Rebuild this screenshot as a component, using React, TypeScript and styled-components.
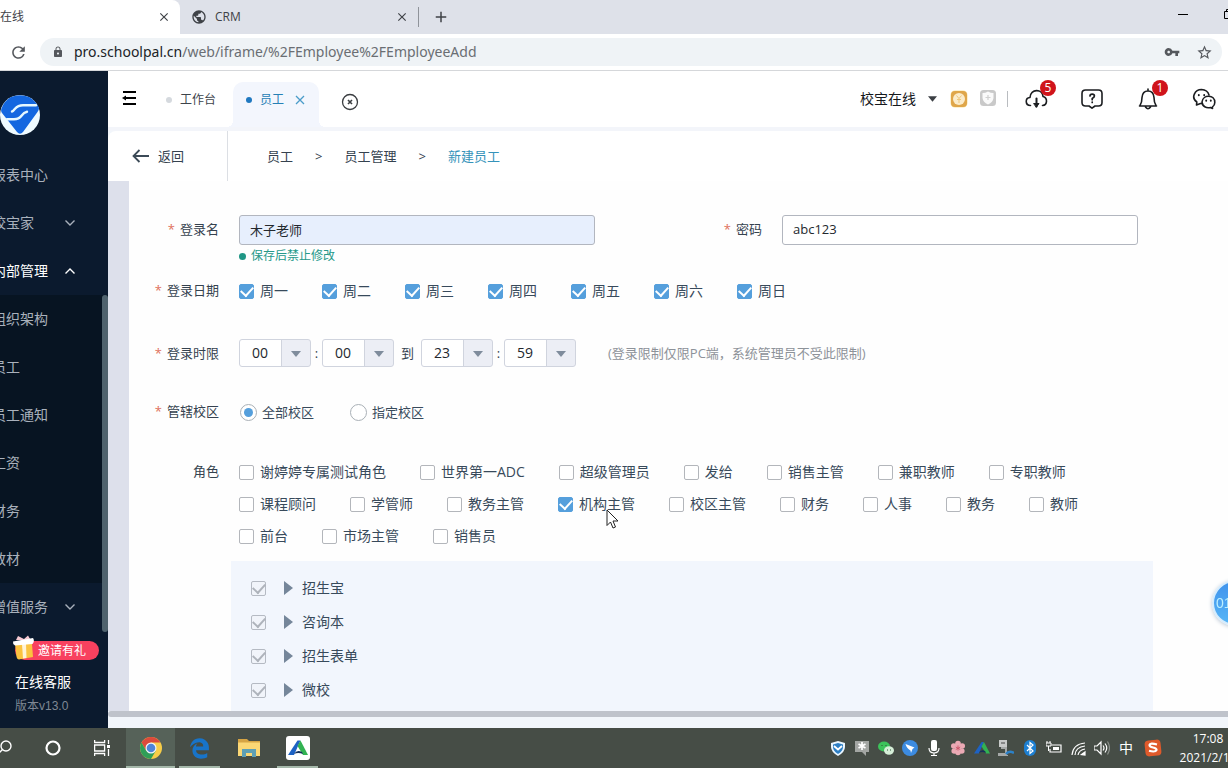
import React from "react";
import styled, { createGlobalStyle, css } from "styled-components";
import { MdRefresh, MdLock, MdVpnKey, MdStarBorder, MdPublic, MdClose, MdAdd } from "react-icons/md";
import { FaEdgeLegacy } from "react-icons/fa6";

const GlobalStyle = createGlobalStyle`
  * { box-sizing: border-box; }
  body {
    margin: 0;
    font-family: "Open Sans", "Noto Sans CJK SC", sans-serif;
    font-size: 14px;
    line-height: 20px;
    color: #35424f;
    background: #fff;
  }
  button, input, select { font: inherit; color: inherit; margin: 0; }
  button { border: 0; padding: 0; background: none; }
  a { color: inherit; text-decoration: none; }
  svg { display: block; flex: none; }
`;

const Desktop = styled.div`
  display: flex;
  flex-direction: column;
  height: 100vh;
  overflow: hidden;
`;

/* ---------- browser frame ---------- */

const TabStrip = styled.div`
  display: flex;
  align-items: center;
  flex: none;
  height: 34px;
  background: #dee1e9;
  color: #3f4247;
`;

const BrowserTab = styled.div<{ $active?: boolean }>`
  display: flex;
  align-items: center;
  gap: 8px;
  height: 34px;
  width: ${(p) => (p.$active ? 180 : 238)}px;
  padding: 0 9px 0 ${(p) => (p.$active ? 0 : 11)}px;
  background: ${(p) => (p.$active ? "#fff" : "transparent")};
  border-top-right-radius: 8px;
  font-size: 12px;
`;

const TabTitle = styled.span<{ $clipped?: boolean }>`
  flex: 1;
  white-space: nowrap;
  margin-left: ${(p) => (p.$clipped ? -24 : 0)}px;
`;

const StripDivider = styled.span`
  width: 1px;
  height: 20px;
  margin-right: 13px;
  background: #8f939a;
`;

const WindowButtons = styled.div`
  display: flex;
  gap: 36px;
  margin-left: auto;
  margin-right: -6px;
  padding-bottom: 6px;
`;

const AddressRow = styled.div`
  display: flex;
  align-items: center;
  flex: none;
  gap: 12px;
  height: 37px;
  padding: 0 6px 0 9px;
  border-bottom: 1px solid #d5d7da;
  color: #55585d;
`;

const Omnibox = styled.div`
  display: flex;
  align-items: center;
  flex: 1;
  height: 28px;
  padding: 0 9px 0 12px;
  border-radius: 14px;
  background: #eff3f6;
`;

const Url = styled.a`
  flex: 1;
  margin-left: 10px;
  font-family: "Noto Sans", sans-serif;
  font-size: 14px;
  color: #6a6e73;
  b { font-weight: 400; color: #202327; }
`;

const KeySlot = styled.span`
  margin-right: 16px;
`;

/* ---------- sidebar ---------- */

const AppShell = styled.div`
  display: flex;
  flex: 1;
  min-height: 0;
`;

const Sidebar = styled.aside`
  position: relative;
  display: flex;
  flex-direction: column;
  flex: none;
  width: 108px;
  overflow: hidden;
  background: #0b1a2e;
  color: #a9b1bc;
`;

const LogoArea = styled.div`
  flex: none;
  height: 80px;
  padding-top: 24px;
`;

const NavGroup = styled.nav<{ $nested?: boolean }>`
  background: ${(p) => (p.$nested ? "#071422" : "transparent")};
`;

const NavLink = styled.a<{ $active?: boolean }>`
  display: flex;
  align-items: center;
  justify-content: space-between;
  height: 48px;
  margin-left: -8px;
  padding-right: 32px;
  white-space: nowrap;
  color: ${(p) => (p.$active ? "#fff" : "inherit")};
`;

const SideThumb = styled.div`
  position: absolute;
  right: 0;
  top: 224px;
  bottom: 96px;
  width: 6px;
  border-radius: 3px;
  background: #4f626d;
`;

const SideFooter = styled.div`
  display: flex;
  flex-direction: column;
  gap: 4px;
  padding: 10px 9px 0 15px;
`;

const InvitePill = styled.button`
  position: relative;
  height: 19px;
  padding-left: 23px;
  border-radius: 10px;
  background: #f8415f;
  color: #fff;
  font-size: 12px;
  line-height: 19px;
  text-align: left;
  svg { position: absolute; left: -3px; bottom: 0; }
`;

const ServiceLink = styled.a`
  margin-top: 8px;
  color: #fff;
`;

const Version = styled.span`
  font-family: "Liberation Sans", "Noto Sans CJK SC", sans-serif;
  font-size: 12px;
  color: #7f8894;
`;

/* ---------- header ---------- */

const Main = styled.main`
  display: flex;
  flex-direction: column;
  flex: 1;
  min-width: 0;
  background: #f2f6fb;
`;

const Header = styled.header`
  display: flex;
  align-items: center;
  flex: none;
  height: 60px;
  padding: 0 12px 2px 13px;
  border-bottom: 4px solid #f3f5fa;
  background: #fff;
  color: #15181c;
`;

const PageTab = styled.a<{ $active?: boolean }>`
  position: relative;
  display: flex;
  align-items: center;
  align-self: flex-end;
  gap: 8px;
  height: 45px;
  margin-bottom: -2px;
  padding: 0 ${(p) => (p.$active ? 13 : 17)}px 9px ${(p) => (p.$active ? 13 : 29)}px;
  border-radius: 10px 10px 0 0;
  background: ${(p) => (p.$active ? "#f3f6fd" : "transparent")};
  color: ${(p) => (p.$active ? "#2680b5" : "#3d444b")};
  font-size: 12px;
  ${(p) =>
    p.$active &&
    css`
      &::before, &::after {
        content: "";
        position: absolute;
        bottom: 0;
        width: 6px;
        height: 6px;
      }
      &::before { right: 100%; background: radial-gradient(circle at 0 0, #fff 6px, #f3f6fd 6px); }
      &::after { left: 100%; background: radial-gradient(circle at 100% 0, #fff 6px, #f3f6fd 6px); }
    `}
`;

const Dot = styled.span<{ $color: string }>`
  width: 6px;
  height: 6px;
  border-radius: 50%;
  background: ${(p) => p.$color};
`;

const CloseAll = styled.button`
  margin: 8px 0 0 22px;
`;

const HeaderRight = styled.div`
  display: flex;
  align-items: center;
  margin-left: auto;
  padding-top: 2px;
`;

const Account = styled.button`
  display: flex;
  align-items: center;
  gap: 12px;
  margin-right: 13px;
`;

const HeaderDivider = styled.span`
  width: 1px;
  height: 16px;
  margin: 0 16px 0 11px;
  background: #b9bcc0;
`;

const Marks = styled.span`
  display: flex;
  gap: 12px;
`;

const Tools = styled.div`
  display: flex;
  gap: 32px;
`;

const Tool = styled.button`
  position: relative;
  width: 24px;
  height: 24px;
`;

const Badge = styled.span`
  position: absolute;
  top: -7px;
  left: 16px;
  width: 16px;
  height: 16px;
  border-radius: 50%;
  background: #d0141b;
  color: #fff;
  font-size: 12px;
  line-height: 16px;
  text-align: center;
`;

const Breadcrumb = styled.div`
  display: flex;
  align-items: center;
  flex: none;
  height: 50px;
  border-top-left-radius: 8px;
  background: #fff;
  font-size: 13px;
`;

const Back = styled.a`
  display: flex;
  align-items: center;
  align-self: stretch;
  gap: 9px;
  width: 120px;
  padding-left: 24px;
  border-right: 1px solid #dcdfe4;
`;

const Crumbs = styled.nav`
  display: flex;
  gap: 22px;
  padding-left: 39px;
`;

const Crumb = styled.a<{ $current?: boolean }>`
  color: ${(p) => (p.$current ? "#3593ba" : "inherit")};
`;

/* ---------- form ---------- */

const Canvas = styled.div`
  flex: 1;
  min-height: 0;
  overflow: hidden;
  padding-left: 21px;
  background: #dde0eb;
`;

const Form = styled.form`
  min-height: 100%;
  padding: 34px 0 10px;
  background: #fefefe;
`;

const FormRow = styled.div<{ $gap?: number }>`
  display: flex;
  gap: 20px;
  margin-top: ${(p) => p.$gap ?? 0}px;
  padding-right: 90px;
`;

const FieldLabel = styled.label<{ $tall?: boolean; $wide?: boolean }>`
  flex: none;
  width: ${(p) => (p.$wide ? 147 : 90)}px;
  font-size: 13px;
  line-height: ${(p) => (p.$tall ? 28 : 18)}px;
  text-align: right;
`;

const Star = styled.span`
  margin-right: 5px;
  color: #e0705c;
`;

const FieldColumn = styled.div`
  flex: 1;
  min-width: 0;
`;

const TextInput = styled.input<{ $filled?: boolean }>`
  display: block;
  width: 100%;
  height: 30px;
  padding: 0 10px 2px;
  border: 1px solid #b2b6bf;
  border-radius: 3px;
  background: ${(p) => (p.$filled ? "#e7effd" : "#fff")};
  font-size: 13px;
  color: #23282e;
`;

const Hint = styled.div`
  display: flex;
  align-items: center;
  gap: 5px;
  margin-top: 1px;
  font-size: 12px;
  color: #26998a;
`;

const HintDot = styled.span`
  width: 7px;
  height: 7px;
  border-radius: 50%;
  background: #1f9685;
`;

const Options = styled.div`
  display: flex;
  flex-wrap: wrap;
  gap: 12px 34px;
  flex: 1;
`;

const Option = styled.label`
  position: relative;
  display: flex;
  align-items: center;
  gap: 6px;
  color: #384a5b;
`;

const CheckBox = styled.input.attrs({ type: "checkbox" })`
  appearance: none;
  display: grid;
  place-items: center;
  flex: none;
  width: 15px;
  height: 15px;
  border: 1px solid #b3b6bb;
  border-radius: 2px;
  background: #fff;
  &:checked { background: #559fdc; border-color: #559fdc; }
  &:checked::after {
    content: "";
    width: 6px;
    height: 10px;
    margin-top: -3px;
    border: solid #fff;
    border-width: 0 2px 2px 0;
    transform: rotate(42deg);
  }
  &:disabled { background: #f1f4fa; border-color: #b5bac3; }
  &:disabled::after { border-color: #aeb3bb; }
`;

const Radio = styled.input.attrs({ type: "radio" })`
  appearance: none;
  display: grid;
  place-items: center;
  flex: none;
  width: 17px;
  height: 17px;
  border: 1px solid #a9b0b6;
  border-radius: 50%;
  background: #fff;
  &:checked::after {
    content: "";
    width: 9px;
    height: 9px;
    border-radius: 50%;
    background: #559fdc;
  }
`;

const RadioOption = styled(Option)`
  gap: 5px;
  padding: 0 1px;
  font-size: 13px;
`;

const TimeRow = styled.div`
  display: flex;
  align-items: center;
  font-size: 13px;
`;

const SelectBox = styled.span`
  position: relative;
  width: 72px;
  svg { position: absolute; right: 10px; top: 12px; pointer-events: none; }
`;

const Select = styled.select`
  appearance: none;
  display: block;
  width: 100%;
  height: 28px;
  padding: 0 12px;
  border: 1px solid #d0d4de;
  border-radius: 3px;
  background: linear-gradient(to right, #fff 41px, #d0d4de 41px, #d0d4de 42px, #eceef5 42px);
  font-size: 14px;
  color: #23282e;
`;

const Between = styled.span<{ $wide?: boolean }>`
  width: ${(p) => (p.$wide ? 27 : 11)}px;
  text-align: center;
`;

const Note = styled.span`
  margin-left: 32px;
  color: #8d9299;
`;

const PointerSlot = styled.span`
  position: absolute;
  left: 48px;
  top: 15px;
`;

const Tree = styled.ul`
  list-style: none;
  margin: 15px 75px 0 102px;
  padding: 10px 20px;
  background: #f2f6fd;
`;

const TreeItem = styled.li`
  display: flex;
  align-items: center;
  height: 34px;
  color: #384a5b;
  label { margin-left: 9px; }
`;

const Expander = styled.button`
  margin-left: 18px;
`;

const HScroll = styled.div`
  flex: none;
  height: 6px;
  margin-bottom: 11px;
  border-radius: 3px 0 0 3px;
  background: #bfc3cb;
`;

const FloatTimer = styled.button`
  position: fixed;
  right: -30px;
  bottom: 142px;
  width: 46px;
  height: 46px;
  padding-left: 2px;
  border: 2px solid #d5ecfd;
  border-radius: 50%;
  background: linear-gradient(#4093ec, #56b5f6);
  box-shadow: 0 1px 4px #b9c6d4;
  color: #bdf0ff;
  font-family: "Liberation Sans", sans-serif;
  font-size: 14px;
  text-align: left;
`;

/* ---------- taskbar ---------- */

const Taskbar = styled.footer`
  display: flex;
  align-items: center;
  flex: none;
  height: 40px;
  background: #464d46;
  overflow: hidden;
`;

const Launchers = styled.div`
  display: flex;
  margin-left: -21px;
`;

const Launcher = styled.button<{ $state?: "open" | "active" }>`
  position: relative;
  display: grid;
  place-items: center;
  width: 49px;
  height: 40px;
  background: ${(p) => (p.$state === "active" ? "#566259" : "transparent")};
  &::after {
    content: "";
    position: absolute;
    bottom: 0;
    left: ${(p) => (p.$state === "active" ? 0 : 4)}px;
    right: ${(p) => (p.$state === "active" ? 0 : 4)}px;
    height: 2px;
    background: ${(p) => (p.$state ? "#a5b8aa" : "transparent")};
  }
`;

const Tray = styled.div`
  display: flex;
  align-items: center;
  margin-left: auto;
`;

const TrayItem = styled.button`
  display: grid;
  place-items: center;
  width: 24px;
  height: 24px;
  color: #fff;
`;

const InputMethod = styled(TrayItem)`
  width: 30px;
`;

const Clock = styled.time`
  width: 60px;
  margin: 0 -10px 0 10px;
  color: #fff;
  font-size: 12px;
  line-height: 19px;
  text-align: center;
`;

/* ---------- drawings ---------- */

const Chevron = ({ up }: { up?: boolean }) => (
  <svg width="12" height="12" viewBox="0 0 12 12" fill="none" stroke="currentColor" strokeWidth="1.4">
    <path d={up ? "M1.5 8.500 6 4l4.500 4.500" : "M1.5 3.500 6 8l4.500-4.500"} />
  </svg>
);

const Caret = ({ w = 10, h = 6, color = "#7f8c9c" }) => (
  <svg width={w} height={h} viewBox="0 0 10 6">
    <path d="M0 0h10L5 6z" fill={color} />
  </svg>
);

const Logo = () => (
  <svg width="40" height="40" viewBox="0 0 40 40">
    <circle cx="20" cy="20" r="20" fill="#effaff" />
    <path d="M11 2Q20-1.500 29 2 36 6 39 13q0 2-1.500 4L23 37q-3 3.500-6 0L2 18q-1.500-2-.500-4.500Q4 6 11 2z" fill="#1467e0" />
    <path d="M36 10.200H23q-5 0-8 3.500-2 2.600-3 2.800M7 24.200h7q5 0 7.500-3.500 2.500-3.500 5.500-4" fill="none" stroke="#e6f8ff" strokeWidth="2.400" strokeLinecap="round" />
  </svg>
);

const Gift = () => (
  <svg width="24" height="25" viewBox="0 0 24 25">
    <path d="M4 5 6 1l6 3 4-3.500 3 5z" fill="#f7c9d2" />
    <path d="M3 9h17l1 13-14 2.500q-2 0-2.500-3z" fill="#fbc33f" />
    <path d="M10 9h4l.5 14-3.500.6z" fill="#fff3d6" />
    <path d="M1 6.500 21 3q2 3-.5 6L3 10.500Q.5 9 1 6.500z" fill="#fff" />
  </svg>
);

const MenuIcon = () => (
  <svg width="16" height="16" viewBox="0 0 16 16" stroke="#000" strokeWidth="2" fill="none">
    <path d="M2 2h13M4 8h11M2 14h13" />
    <path d="M5 5.500 1 8l4 2.500z" fill="#000" stroke="none" />
  </svg>
);

const CircleX = () => (
  <svg width="18" height="18" viewBox="0 0 18 18" fill="none" stroke="#3a3d40">
    <circle cx="9" cy="9" r="7.500" strokeWidth="1.300" />
    <path d="m7 7 4 4m0-4-4 4" strokeWidth="1.600" />
  </svg>
);

const GoldCoin = () => (
  <svg width="18" height="18" viewBox="-1 -1 18 18">
    <rect x="-.5" y="-.5" width="17" height="17" rx="4.500" fill="#fbe3a2" />
    <rect width="16" height="16" rx="4" fill="#dfa64a" />
    <circle cx="8" cy="8" r="6" fill="#fbeccb" />
    <path d="m5.500 4.500 2.500 3 2.500-3M8 7.500V12M6 8.500h4" fill="none" stroke="#eec77c" />
  </svg>
);

const GreyShield = () => (
  <svg width="16" height="16" viewBox="0 0 16 16">
    <rect width="16" height="16" rx="3.500" fill="#c9c9c9" />
    <path d="M8 1.500q2.500 1.500 5.500 1.500v5q-.5 4-5.500 6.500Q3 12 2.500 8V3q3 0 5.500-1.500z" fill="#fafafa" />
    <path d="M8 5v5M5.500 7.500h5" stroke="#d0d0d0" strokeWidth="1.200" />
  </svg>
);

const line = { fill: "none", stroke: "#1b1d20", strokeWidth: 1.6, strokeLinecap: "round" as const, strokeLinejoin: "round" as const };

const CloudIcon = () => (
  <svg width="24" height="24" viewBox="0 0 24 24" {...line}>
    <path d="M6.500 18.500C1 18.500.8 10.800 6 10.500 6.500 1.500 18.500 1.500 19 9.500c5 1.500 4.500 8.500-.5 9" />
    <path d="M12.500 11.500v8" strokeWidth="2" />
    <path d="M10 16.500h5l-2.500 3.500z" fill="#1b1d20" strokeWidth="1" />
  </svg>
);

const HelpIcon = () => (
  <svg width="24" height="24" viewBox="0 0 24 24" {...line}>
    <path d="M5.500 3h13Q22 3 22 6.500v9q0 3.500-3.500 3.500H15l-3 2.200L9 19H5.500Q2 19 2 15.500v-9Q2 3 5.500 3z" />
    <path d="M10 9q0-1.800 2.200-1.800T14.400 9q0 1.300-2.200 2.400v1.300M12.200 15v.4" strokeWidth="1.700" />
  </svg>
);

const BellIcon = () => (
  <svg width="24" height="24" viewBox="0 0 24 24" {...line}>
    <path d="M12 2v2M3.500 19h17M4 18.500q2-3 2-8Q6.500 4 12 4t6 6.500q0 5 2 8M9.500 20q2.500 3.500 5 0" />
  </svg>
);

const WechatIcon = () => (
  <svg width="24" height="24" viewBox="0 0 24 24" {...line}>
    <path d="M10.500 16.500H8.500L4.500 18l.3-3C-1.500 10.500 3 2.500 9.500 2.500q6 .3 7.500 5.500" />
    <path d="M20.500 19.800v1.700l-2-1c-4 1-8.500-1-8.500-5.500 1-8 13-7.500 12.800.5q0 2.800-2.300 4.300z" />
    <path d="M6.800 8v.3M12.200 8v.3M14.200 13.500v.3M18.800 13.500v.3" strokeWidth="1.900" />
  </svg>
);

const BackArrow = () => (
  <svg width="17" height="14" viewBox="0 0 17 14" fill="none" stroke="#3c4a57" strokeWidth="1.800">
    <path d="M17 7H2M7.500 1l-6 6 6 6" />
  </svg>
);

const MousePointer = () => (
  <svg width="13" height="20" viewBox="0 0 13 20">
    <path d="M1 1v15.500l3.500-3.500 2.500 6 2.500-1-2.500-6h5z" fill="#fff" stroke="#222" />
  </svg>
);

const ChromeIcon = () => (
  <svg width="24" height="24" viewBox="0 0 24 24">
    <circle cx="12" cy="12" r="11" fill="#f7cd48" />
    <path d="M2.500 6.500A11 11 0 0 1 21.500 6.500H12L7.200 14.800z" fill="#db4a3c" />
    <path d="M2.500 6.500A11 11 0 0 0 12 23l4.800-8.200-9.600 0z" fill="#2f9e58" />
    <circle cx="12" cy="12" r="5.500" fill="#f3f6f5" />
    <circle cx="12" cy="12" r="4.300" fill="#4f84d8" />
  </svg>
);

const FolderIcon = () => (
  <svg width="22" height="20" viewBox="0 0 22 20">
    <path d="M0 1h9l2 2h11v6H0z" fill="#d6a444" />
    <path d="M0 4.500h22V18H0z" fill="#fbd775" />
    <path d="M4 19v-8h14v8h-4v-4H8v4z" fill="#5e9fb4" />
  </svg>
);

const SailIcon = ({ tile }: { tile?: boolean }) => (
  <svg width={tile ? 24 : 16} height={tile ? 24 : 16} viewBox={tile ? "0 0 24 24" : "2 3 20 18"}>
    {tile && <rect width="24" height="24" rx="3" fill="#fff" />}
    <path d="M11.500 4.500h3L8 19H2z" fill="#1d62c4" />
    <path d="M14.500 4.500 22 19h-5L11.500 10z" fill="#32b252" />
    <path d="M8 18q3-5 8-2l1 2q-5-2-9 0z" fill="#14305a" />
  </svg>
);

const trayIcons: { name: string; art: React.ReactNode }[] = [
  { name: "安全卫士", art: <><path d="M8 1l7 2v4q0 5-7 9-7-4-7-9V3z" fill="#eaf6ff" /><path d="M8 3l5 1.500V7q0 4-5 7-5-3-5-7V4.500z" fill="#2d7fc4" /><path d="M4 6l4 3.500L12 6" fill="none" stroke="#fff" strokeWidth="1.800" /></> },
  { name: "消息", art: <><path d="M1 1h14v11h-3v4l-4-4H1z" fill="#a3a6a3" /><path d="M8 2v8M4.500 4l7 4M11.500 4l-7 4" stroke="#fff" strokeWidth="1.700" /></> },
  { name: "微信", art: <><ellipse cx="6" cy="6.500" rx="6" ry="5" fill="#3cc35a" /><ellipse cx="11" cy="10.500" rx="5" ry="4.200" fill="#d6efd8" /><path d="M4 5v1M8 5v1M9.500 9.500v1M12.500 9.500v1" stroke="#2c5136" /></> },
  { name: "钉钉", art: <><circle cx="8" cy="8" r="8" fill="#3c8be0" /><path d="M3.500 4l9 3.500-2 1.500L9 13l-.5-2.500Q4.500 8 3.500 4z" fill="#fff" /></> },
  { name: "麦克风", art: <><rect x="5" y="0" width="6" height="11" rx="2" fill="#fff" /><path d="M3 8q0 5 5 5t5-5M8 13v2M5 15.500h6" fill="none" stroke="#fff" strokeWidth="1.200" /></> },
  { name: "花朵", art: <><g fill="#eba9b4"><circle cx="8" cy="3.500" r="2.800" /><circle cx="3.800" cy="6" r="2.800" /><circle cx="12.200" cy="6" r="2.800" /><circle cx="4.200" cy="11" r="2.800" /><circle cx="11.800" cy="11" r="2.800" /><circle cx="8" cy="12.500" r="2.800" /><circle cx="8" cy="8" r="3" /></g><path d="M8 5.500v5M5.800 7l4.400 2.500M10.200 7 5.800 9.500" stroke="#c95468" strokeWidth=".9" /></> },
  { name: "直播", art: <SailIcon /> },
  { name: "设备", art: <><rect x="1" y="0" width="8" height="7" fill="#c7c9c8" /><path d="M3 3h4" stroke="#444" /><path d="M3 8h5v6H1v2h9" fill="none" stroke="#a5a8a7" strokeWidth="2" /><path d="M8 14q3-4 8-1" fill="none" stroke="#2c82c9" strokeWidth="2.400" /></> },
  { name: "蓝牙", art: <><rect x="2" y="0" width="12" height="16" rx="6" fill="#1c7fd2" /><path d="M5 5l6 6-3 2.500v-11L11 5l-6 6" fill="none" stroke="#fff" strokeWidth="1.200" /></> },
  { name: "电源", art: <><path d="M5.500 5H15v7H4V9" fill="none" stroke="#fff" strokeWidth="1.200" /><path d="M7 7h6v3H7z" fill="#fff" /><path d="M0 3h5v3H0zM1 1v2M4 1v2M2.500 6v5" fill="none" stroke="#fff" /></> },
  { name: "网络", art: <g fill="none" stroke="#fff" strokeWidth="1.200"><path d="M2 15Q3 4 15 3M5 15q.5-8 10-9M8 15q1-5 7-6" /><path d="M11.500 14.500 15 12v3z" fill="#fff" /></g> },
  { name: "音量", art: <g fill="none" stroke="#fff" strokeWidth="1.200"><path d="M0 6h3l4-4v12l-4-4H0zM9 5.500q2 2.500 0 5M11 3.500q3.500 4.500 0 9" /><path d="M13.500 1.500q4 6.500 0 13" stroke="#8b908b" /></g> },
];

/* ---------- data ---------- */

const subMenu = ["组织架构", "员工", "员工通知", "工资", "财务", "教材"];
const days = ["周一", "周二", "周三", "周四", "周五", "周六", "周日"];
const roles = [
  "谢婷婷专属测试角色", "世界第一ADC", "超级管理员", "发给", "销售主管", "兼职教师", "专职教师",
  "课程顾问", "学管师", "教务主管", "机构主管", "校区主管", "财务", "人事", "教务", "教师",
  "前台", "市场主管", "销售员",
];
const modules = ["招生宝", "咨询本", "招生表单", "微校"];

const TimeSelect = ({ value, label }: { value: string; label: string }) => (
  <SelectBox>
    <Select defaultValue={value} aria-label={label}>
      <option>{value}</option>
    </Select>
    <Caret />
  </SelectBox>
);

export default function App() {
  return (
    <Desktop>
      <GlobalStyle />
      <TabStrip>
        <BrowserTab $active>
          <TabTitle $clipped>校宝在线</TabTitle>
          <MdClose size={14} />
        </BrowserTab>
        <BrowserTab>
          <MdPublic size={16} />
          <TabTitle>CRM</TabTitle>
          <MdClose size={14} />
        </BrowserTab>
        <StripDivider />
        <MdAdd size={18} />
        <WindowButtons>
          <svg width="10" height="10" viewBox="0 0 10 10"><path d="M0 5.500h10" stroke="#000" /></svg>
          <svg width="10" height="10" viewBox="0 0 10 10" fill="none" stroke="#000"><path d="M.5 2.500h7v7h-7zM2.500 2V.5h7v7H8" /></svg>
        </WindowButtons>
      </TabStrip>
      <AddressRow>
        <MdRefresh size={19} />
        <Omnibox>
          <MdLock size={12} />
          <Url href="#"><b>pro.schoolpal.cn</b>/web/iframe/%2FEmployee%2FEmployeeAdd</Url>
          <KeySlot><MdVpnKey size={16} /></KeySlot>
          <MdStarBorder size={17} />
        </Omnibox>
      </AddressRow>

      <AppShell>
        <Sidebar>
          <LogoArea><Logo /></LogoArea>
          <NavGroup>
            <NavLink href="#">报表中心</NavLink>
            <NavLink href="#">校宝家<Chevron /></NavLink>
            <NavLink href="#" $active>内部管理<Chevron up /></NavLink>
          </NavGroup>
          <NavGroup $nested>
            {subMenu.map((t) => <NavLink href="#" key={t}>{t}</NavLink>)}
          </NavGroup>
          <NavGroup>
            <NavLink href="#">增值服务<Chevron /></NavLink>
          </NavGroup>
          <SideFooter>
            <InvitePill><Gift />邀请有礼</InvitePill>
            <ServiceLink href="#">在线客服</ServiceLink>
            <Version>版本v13.0</Version>
          </SideFooter>
          <SideThumb />
        </Sidebar>

        <Main>
          <Header>
            <button aria-label="收起菜单"><MenuIcon /></button>
            <PageTab href="#"><Dot $color="#d5d9de" />工作台</PageTab>
            <PageTab href="#" $active>
              <Dot $color="#1f78c0" />员工
              <svg width="14" height="12" viewBox="-2 0 14 12" stroke="#4a9cc9" strokeWidth="1.300"><path d="m2 2 8 8m0-8-8 8" /></svg>
            </PageTab>
            <CloseAll aria-label="关闭全部"><CircleX /></CloseAll>
            <HeaderRight>
              <Account>校宝在线<Caret w={9} h={6} color="#3b3f44" /></Account>
              <Marks>
                <GoldCoin />
                <GreyShield />
              </Marks>
              <HeaderDivider />
              <Tools>
                <Tool aria-label="下载"><CloudIcon /><Badge>5</Badge></Tool>
                <Tool aria-label="帮助"><HelpIcon /></Tool>
                <Tool aria-label="通知"><BellIcon /><Badge>1</Badge></Tool>
                <Tool aria-label="微信"><WechatIcon /></Tool>
              </Tools>
            </HeaderRight>
          </Header>
          <Breadcrumb>
            <Back href="#"><BackArrow />返回</Back>
            <Crumbs>
              <Crumb href="#">员工</Crumb>
              <span>&gt;</span>
              <Crumb href="#">员工管理</Crumb>
              <span>&gt;</span>
              <Crumb href="#" $current>新建员工</Crumb>
            </Crumbs>
          </Breadcrumb>

          <Canvas>
            <Form>
              <FormRow>
                <FieldLabel htmlFor="login" $tall><Star>*</Star>登录名</FieldLabel>
                <FieldColumn>
                  <TextInput id="login" defaultValue="木子老师" $filled />
                  <Hint><HintDot />保存后禁止修改</Hint>
                </FieldColumn>
                <FieldLabel htmlFor="password" $tall $wide><Star>*</Star>密码</FieldLabel>
                <FieldColumn>
                  <TextInput id="password" defaultValue="abc123" />
                </FieldColumn>
              </FormRow>
              <FormRow $gap={15}>
                <FieldLabel as="span"><Star>*</Star>登录日期</FieldLabel>
                <Options>
                  {days.map((d) => <Option key={d}><CheckBox defaultChecked />{d}</Option>)}
                </Options>
              </FormRow>
              <FormRow $gap={38}>
                <FieldLabel as="span" $tall><Star>*</Star>登录时限</FieldLabel>
                <TimeRow>
                  <TimeSelect value="00" label="开始小时" />
                  <Between>:</Between>
                  <TimeSelect value="00" label="开始分钟" />
                  <Between $wide>到</Between>
                  <TimeSelect value="23" label="结束小时" />
                  <Between>:</Between>
                  <TimeSelect value="59" label="结束分钟" />
                  <Note>(登录限制仅限PC端，系统管理员不受此限制)</Note>
                </TimeRow>
              </FormRow>
              <FormRow $gap={35}>
                <FieldLabel as="span"><Star>*</Star>管辖校区</FieldLabel>
                <Options>
                  <RadioOption><Radio name="campus" defaultChecked />全部校区</RadioOption>
                  <RadioOption><Radio name="campus" />指定校区</RadioOption>
                </Options>
              </FormRow>
              <FormRow $gap={40}>
                <FieldLabel as="span">角色</FieldLabel>
                <Options>
                  {roles.map((r) => (
                    <Option key={r}>
                      <CheckBox defaultChecked={r === "机构主管"} />{r}
                      {r === "机构主管" && <PointerSlot><MousePointer /></PointerSlot>}
                    </Option>
                  ))}
                </Options>
              </FormRow>
              <Tree>
                {modules.map((m, i) => (
                  <TreeItem key={m}>
                    <CheckBox id={`module-${i}`} defaultChecked disabled />
                    <Expander type="button" aria-label={`展开${m}`}>
                      <svg width="9" height="14" viewBox="0 0 9 14"><path d="M0 0l9 7-9 7z" fill="#75869a" /></svg>
                    </Expander>
                    <label htmlFor={`module-${i}`}>{m}</label>
                  </TreeItem>
                ))}
              </Tree>
            </Form>
          </Canvas>
          <HScroll />
        </Main>
      </AppShell>

      <Taskbar>
        <Launchers>
          <Launcher aria-label="搜索">
            <svg width="16" height="16" viewBox="0 0 16 16" fill="none" stroke="#fff" strokeWidth="1.400"><circle cx="10" cy="6" r="5" /><path d="m6.500 9.500-6 6" /></svg>
          </Launcher>
          <Launcher aria-label="Cortana">
            <svg width="16" height="16" viewBox="0 0 16 16"><circle cx="8" cy="8" r="6.500" fill="none" stroke="#fff" strokeWidth="2.200" /></svg>
          </Launcher>
          <Launcher aria-label="任务视图">
            <svg width="16" height="16" viewBox="0 0 16 16" fill="none" stroke="#fff" strokeWidth="1.300"><path d="M.6 0v2.500h10V0M.6 5h10v6H.6zM.6 16v-2.500h10V16M14.500 0v4M14.500 9v7" /><path d="M13 5h3v3h-3z" fill="#fff" stroke="none" /></svg>
          </Launcher>
          <Launcher $state="active" aria-label="Chrome"><ChromeIcon /></Launcher>
          <Launcher $state="open" aria-label="Edge"><FaEdgeLegacy size={21} color="#1874c9" /></Launcher>
          <Launcher aria-label="文件资源管理器"><FolderIcon /></Launcher>
          <Launcher $state="open" aria-label="直播课堂"><SailIcon tile /></Launcher>
        </Launchers>
        <Tray>
          {trayIcons.map((t) => (
            <TrayItem key={t.name} aria-label={t.name}>
              <svg width="16" height="16" viewBox="0 0 16 16">{t.art}</svg>
            </TrayItem>
          ))}
          <TrayItem aria-label="输入法">中</TrayItem>
          <InputMethod aria-label="搜狗输入法">
            <svg width="18" height="18" viewBox="-1 -1 18 18"><rect width="16" height="16" rx="4" fill="#df5a2b" transform="rotate(-6 8 8)" /><path d="M12 4.500q-7-2-7.500.5 0 1.800 3.500 2.500 4 .8 3.500 2.500-1 2.500-7.500.8" fill="none" stroke="#fff" strokeWidth="2.200" /></svg>
          </InputMethod>
        </Tray>
        <Clock>17:08<br />2021/2/19</Clock>
      </Taskbar>
      <FloatTimer>01</FloatTimer>
    </Desktop>
  );
}
